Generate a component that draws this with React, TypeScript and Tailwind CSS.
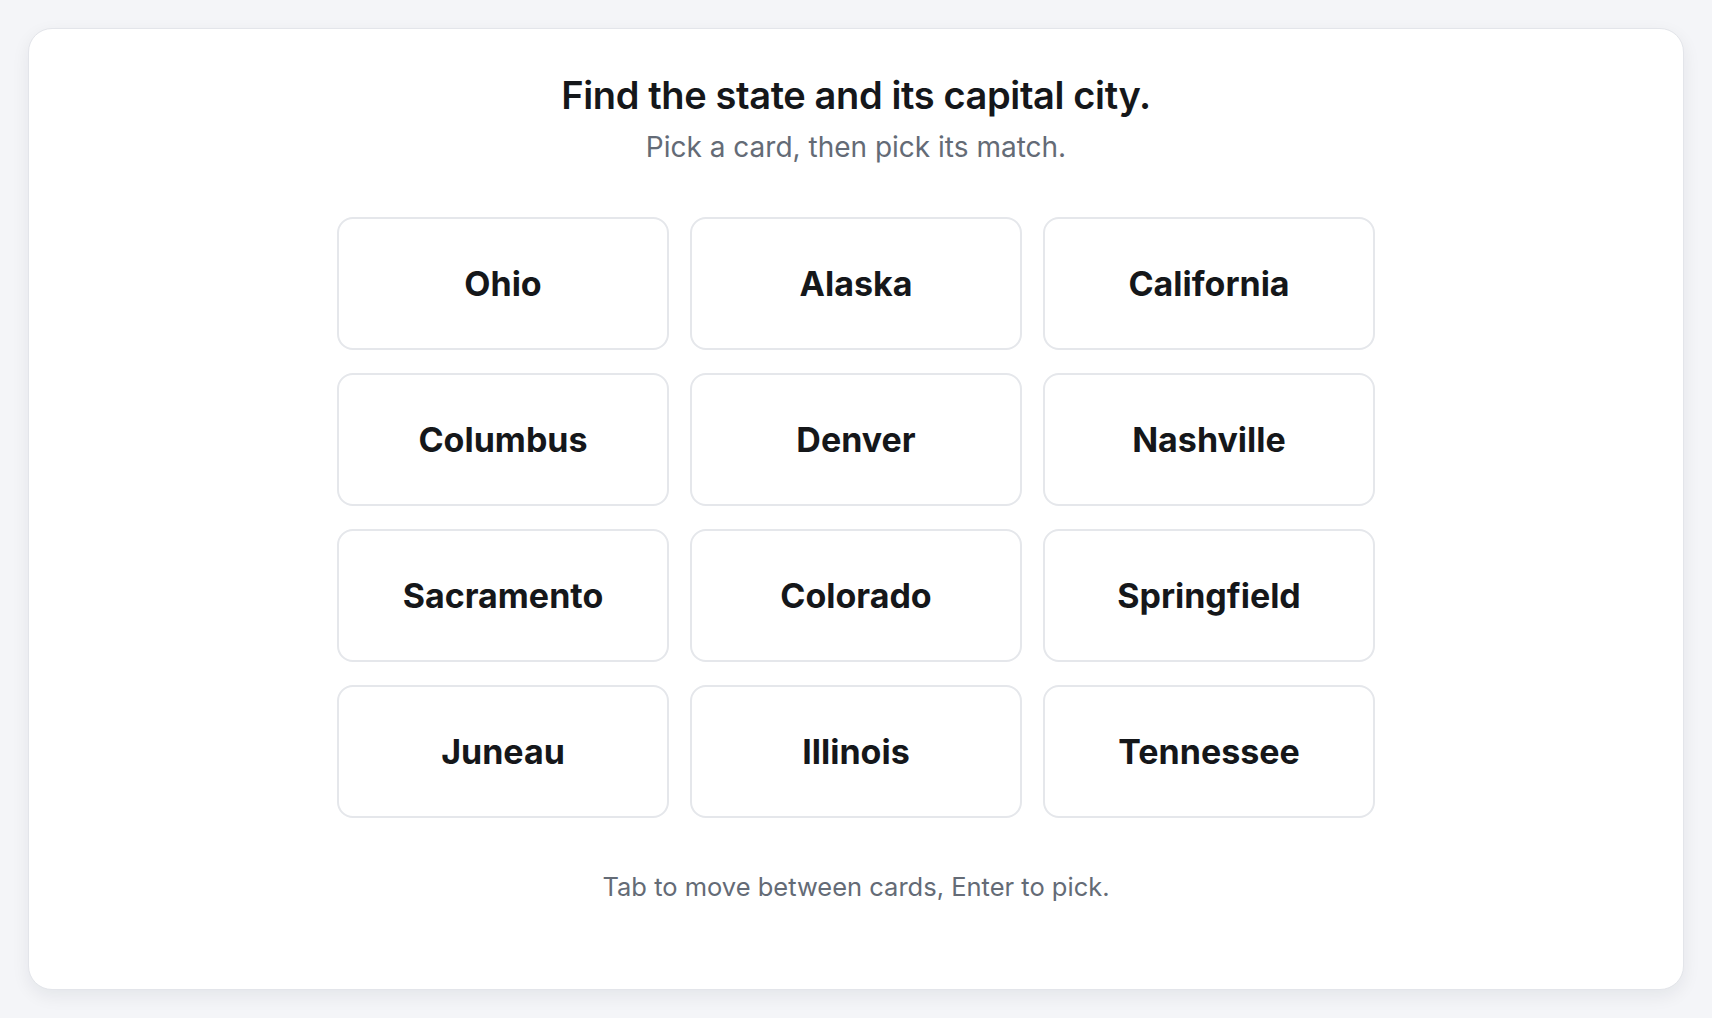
import React, { useState } from 'react';

const CARDS = [
  'Ohio',
  'Alaska',
  'California',
  'Columbus',
  'Denver',
  'Nashville',
  'Sacramento',
  'Colorado',
  'Springfield',
  'Juneau',
  'Illinois',
  'Tennessee',
];

export default function App() {
  const [picked, setPicked] = useState<number | null>(null);

  return (
    <div
      className="min-h-screen bg-[#f4f5f8] p-[28px]"
      style={{ fontFamily: 'Inter, "Noto Sans", sans-serif' }}
    >
      <div className="flex h-[962px] flex-col items-center rounded-[24px] border border-[#e3e5ea] bg-white pt-[44px] shadow-[0_6px_18px_rgba(15,23,42,0.07)]">
        <h1 className="text-[38px] leading-[44px] font-semibold tracking-[-0.01em] text-[#15171a]">
          Find the state and its capital city.
        </h1>
        <p className="mt-3 text-[28px] leading-9 text-[#646b76]">Pick a card, then pick its match.</p>

        <div className="mt-[52px] grid w-[1038px] grid-cols-3 gap-x-[21px] gap-y-[23px]">
          {CARDS.map((name, i) => (
            <button
              key={name}
              type="button"
              onClick={() => setPicked(i)}
              className={
                'flex h-[133px] items-center justify-center rounded-2xl border-2 bg-white text-[34px] font-bold text-[#15171a] ' +
                (picked === i ? 'border-[#9ca3af]' : 'border-[#e5e7eb]')
              }
            >
              {name}
            </button>
          ))}
        </div>

        <p className="mt-[53px] text-[25.5px] leading-8 text-[#646b76]">
          Tab to move between cards, Enter to pick.
        </p>
      </div>
    </div>
  );
}
